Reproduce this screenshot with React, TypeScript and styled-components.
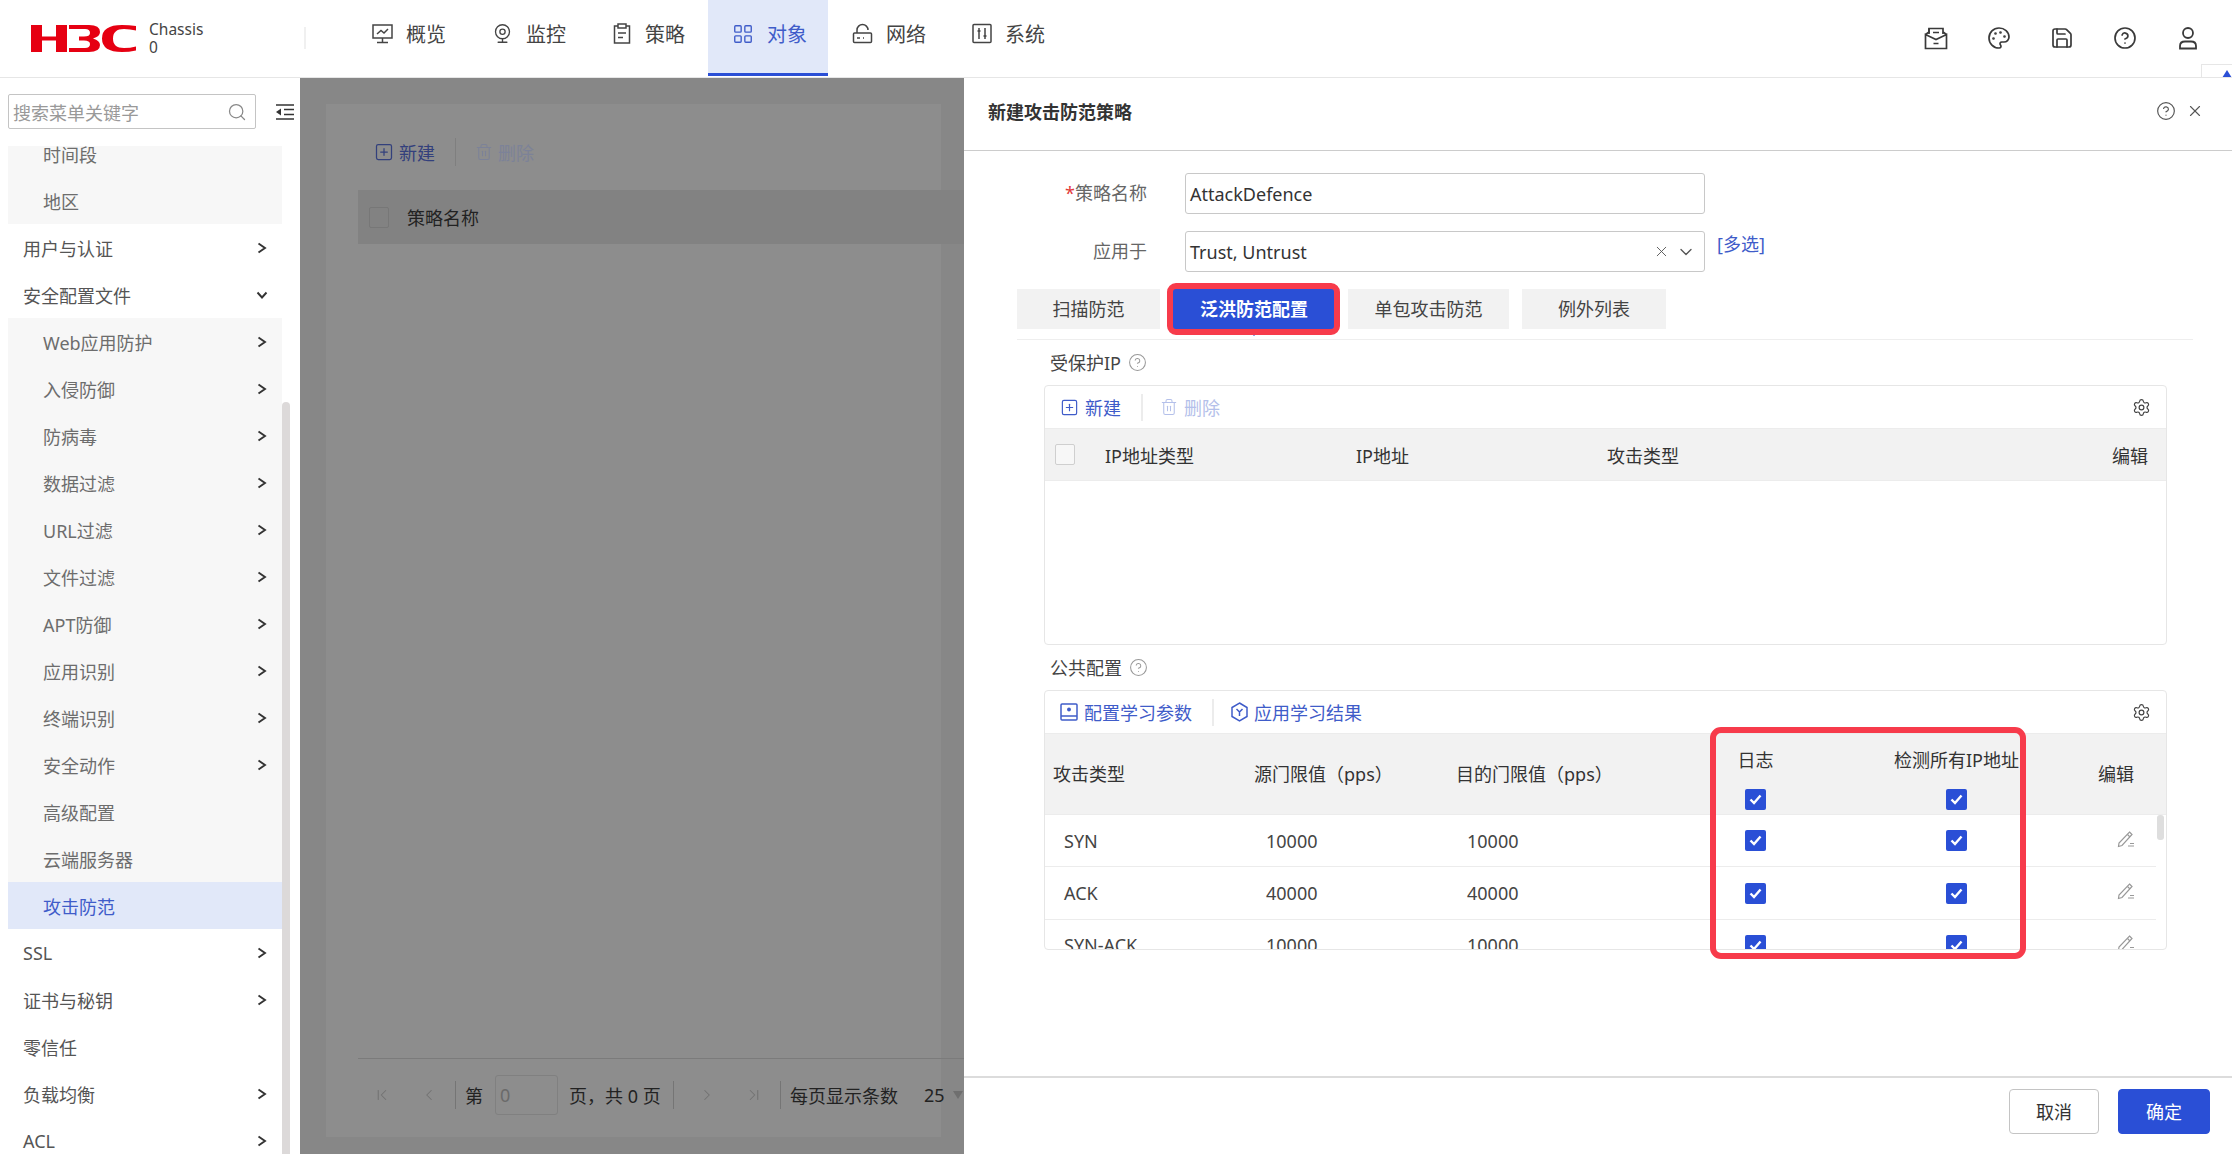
import React from 'react';
import styled, { createGlobalStyle } from 'styled-components';
import {
  ChevronDown,
  ChevronFirst,
  ChevronLast,
  ChevronLeft,
  ChevronRight,
  CircleHelp,
  LayoutGrid,
  Palette,
  Save,
  Search,
  Settings,
  SquarePlus,
  Trash2,
  Webcam,
  X,
} from 'lucide-react';

const BLUE = '#2a4fd6';
const LINK = '#3f5cc9';
const MUTED_LINK = '#b4c0ea';
const HIGHLIGHT = '#f73b4b';

const GlobalStyle = createGlobalStyle`
  html, body {
    margin: 0;
    padding: 0;
    background: #fff;
    overflow: hidden;
  }
  body {
    font-family: "Noto Sans", "Noto Sans CJK SC", sans-serif;
    font-size: 18px;
    color: #333;
  }
  * {
    box-sizing: border-box;
  }
`;

const Page = styled.div`
  display: flex;
  flex-direction: column;
  width: 2232px;
  height: 1154px;
  overflow: hidden;
`;

/* top bar */

const TopBar = styled.header`
  position: relative;
  display: flex;
  align-items: center;
  flex: 0 0 78px;
  padding: 0 32px 1px 31px;
  border-bottom: 1px solid #e6e6e6;
`;

const Brand = styled.div`
  display: flex;
  align-items: center;
  gap: 13px;
  width: 275px;
  height: 22px;
  border-right: 2px solid #f0f0f0;
`;

const BrandText = styled.div`
  font-size: 15.5px;
  line-height: 18px;
  color: #444;
`;

const Nav = styled.nav`
  display: flex;
  align-self: stretch;
  margin-left: 42px;
`;

const NavItem = styled.div<{ $active?: boolean }>`
  display: flex;
  align-items: center;
  gap: 13px;
  width: 120px;
  padding: 0 0 6px 24px;
  font-size: 20px;
  color: ${({ $active }) => ($active ? LINK : '#444')};
  background: ${({ $active }) => ($active ? '#e1e8f9' : 'transparent')};
  border-bottom: 3px solid ${({ $active }) => ($active ? BLUE : 'transparent')};
`;

const TopActions = styled.div`
  display: flex;
  align-items: center;
  gap: 39px;
  margin-left: auto;
  color: #3a3a3a;
`;

const CornerTab = styled.div`
  position: absolute;
  right: 0;
  bottom: 0;
  width: 31px;
  height: 13px;
  background: #fff;
  border: 1px solid #e6e6e6;
  border-right: 0;
  border-bottom: 0;
  overflow: hidden;

  &::after {
    content: '';
    position: absolute;
    right: 0;
    bottom: -1px;
    border-style: solid;
    border-width: 0 5px 8px 5px;
    border-color: transparent transparent ${BLUE} transparent;
  }
`;

/* main area */

const Main = styled.div`
  display: flex;
  flex: 1;
  min-height: 0;
`;

const Sidebar = styled.aside`
  position: relative;
  display: flex;
  flex-direction: column;
  flex: 0 0 300px;
  overflow: hidden;
`;

const SearchRow = styled.div`
  display: flex;
  align-items: flex-start;
  flex: 0 0 68px;
  gap: 20px;
  padding: 16px 0 0 8px;
`;

const SearchBox = styled.div`
  display: flex;
  align-items: center;
  justify-content: space-between;
  width: 248px;
  height: 35px;
  padding: 0 8px 0 4px;
  border: 1px solid #c4c4c4;
  border-radius: 2px;
  font-size: 18px;
  color: #999;
`;

const CollapseBtn = styled.div`
  display: flex;
  height: 35px;
  align-items: center;
  color: #333;
`;

const MenuViewport = styled.div`
  flex: 1;
  min-height: 0;
  overflow: hidden;
`;

const MenuList = styled.div`
  width: 274px;
  margin: -16px 0 0 8px;
`;

const MenuRow = styled.div<{ $sub?: boolean; $active?: boolean }>`
  display: flex;
  align-items: center;
  justify-content: space-between;
  height: 47px;
  padding: 0 14px 0 ${({ $sub }) => ($sub ? 35 : 15)}px;
  font-size: 18px;
  color: ${({ $sub, $active }) => ($active ? LINK : $sub ? '#6d6d6d' : '#555')};
  background: ${({ $sub, $active }) => ($active ? '#e1e8f9' : $sub ? '#f7f7f7' : 'transparent')};
`;

const MenuScrollThumb = styled.div`
  position: absolute;
  top: 324px;
  bottom: 0;
  left: 282px;
  width: 8px;
  border-radius: 4px 4px 0 0;
  background: #dcd9d9;
`;

/* dimmed page behind the drawer */

const Backdrop = styled.div`
  display: flex;
  flex: 0 0 664px;
  padding: 26px 23px 17px 26px;
  background: #878787;
`;

const BackdropPanel = styled.div`
  display: flex;
  flex-direction: column;
  flex: 1;
  padding-left: 32px;
  background: #8d8d8d;
`;

const BackdropToolbar = styled.div`
  display: flex;
  align-items: center;
  flex: 0 0 86px;
  padding: 10px 0 0 16px;
  font-size: 18px;
`;

const BackdropAction = styled.div<{ $disabled?: boolean }>`
  display: flex;
  align-items: center;
  gap: 5px;
  color: ${({ $disabled }) => ($disabled ? '#7c8298' : '#33407c')};
`;

const BackdropDivider = styled.div`
  width: 1px;
  height: 28px;
  margin: 0 19px 0 20px;
  background: #7f7f7f;
`;

const BackdropTableHead = styled.div`
  display: flex;
  align-items: center;
  flex: 0 0 54px;
  gap: 18px;
  margin-right: -23px;
  padding-left: 11px;
  background: #828282;
  color: #222;
`;

const BackdropCheck = styled.div`
  width: 20px;
  height: 21px;
  border: 1px solid #777;
  border-radius: 2px;
`;

const BackdropSpacer = styled.div`
  flex: 1;
`;

const Pager = styled.div`
  display: flex;
  align-items: center;
  flex: 0 0 79px;
  margin-right: -23px;
  padding-bottom: 6px;
  border-top: 1px solid #7b7b7b;
  color: #222;
`;

const PagerBtn = styled.div`
  display: flex;
  align-items: center;
  justify-content: center;
  width: 47px;
  color: #727272;
`;

const PagerDivider = styled.div<{ $gap: number }>`
  width: 1px;
  height: 28px;
  margin: 0 9px 0 ${({ $gap }) => $gap}px;
  background: #757575;
`;

const PagerInput = styled.div`
  width: 63px;
  height: 40px;
  margin: 0 11px 0 12px;
  padding: 0 4px;
  line-height: 38px;
  border: 1px solid #808080;
  border-radius: 3px;
  color: #6a6a6a;
`;

const PagerText = styled.div<{ $width?: number }>`
  width: ${({ $width }) => ($width ? `${$width}px` : 'auto')};
  white-space: nowrap;
`;

const PagerArrow = styled.div`
  width: 0;
  height: 0;
  margin-left: 8px;
  border-style: solid;
  border-width: 8px 5px 0 5px;
  border-color: #6f6f6f transparent transparent transparent;
`;

/* drawer */

const Drawer = styled.section`
  display: flex;
  flex-direction: column;
  flex: 1;
  min-width: 0;
  background: #fff;
`;

const DrawerHead = styled.div`
  display: flex;
  align-items: center;
  justify-content: space-between;
  flex: 0 0 73px;
  padding: 0 28px 6px 24px;
  border-bottom: 1px solid #ccc;
`;

const DrawerTitle = styled.div`
  font-size: 18px;
  font-weight: 700;
  color: #333;
`;

const DrawerHeadIcons = styled.div`
  display: flex;
  align-items: center;
  gap: 10px;
  color: #555;
`;

const DrawerBody = styled.div`
  flex: 1;
  min-height: 0;
  padding-top: 22px;
  overflow: hidden;
`;

const FormRow = styled.div`
  display: flex;
  align-items: flex-start;
  margin-bottom: 17px;
`;

const FormLabel = styled.div`
  flex: 0 0 183px;
  height: 41px;
  line-height: 41px;
  text-align: right;
  color: #666;

  em {
    font-style: normal;
    color: #e23b3b;
  }
`;

const Field = styled.div`
  display: flex;
  align-items: center;
  justify-content: space-between;
  width: 520px;
  height: 41px;
  margin-left: 38px;
  padding: 0 8px 0 4px;
  border: 1px solid #c8c8c8;
  border-radius: 3px;
  color: #333;
`;

const FieldIcons = styled.div`
  display: flex;
  align-items: center;
  gap: 6px;
  color: #555;
`;

const MultiLink = styled.a`
  margin: 1px 0 0 12px;
  line-height: 24px;
  color: ${LINK};
`;

const TabBar = styled.div`
  display: flex;
  gap: 13px;
  margin: 0 39px 0 53px;
  padding-bottom: 10px;
  border-bottom: 1px solid #eee;
`;

const Tab = styled.div<{ $active?: boolean; $width: number }>`
  position: relative;
  width: ${({ $width }) => $width}px;
  height: 40px;
  line-height: 40px;
  text-align: center;
  background: ${({ $active }) => ($active ? BLUE : '#f2f2f2')};
  color: ${({ $active }) => ($active ? '#fff' : '#444')};
  font-weight: ${({ $active }) => ($active ? 700 : 400)};

  ${({ $active }) =>
    $active
      ? `&::after {
    content: '';
    position: absolute;
    left: 50%;
    bottom: -7px;
    margin-left: -7px;
    border-style: solid;
    border-width: 7px 7px 0 7px;
    border-color: ${BLUE} transparent transparent transparent;
  }`
      : ''}
`;

const TabHighlight = styled.div`
  position: absolute;
  inset: -6px -5px -6px -6px;
  border: 6px solid ${HIGHLIGHT};
  border-radius: 9px;
  z-index: 1;
`;

const SectionTitle = styled.div`
  display: flex;
  align-items: center;
  gap: 7px;
  height: 45px;
  padding: 0 0 1px 86px;
  color: #444;
`;

const SectionHint = styled.span`
  display: flex;
  color: #999;
`;

const CardWrap = styled.div`
  position: relative;
  width: 1123px;
  margin-left: 80px;
`;

const Card = styled.div`
  position: relative;
  height: 260px;
  border: 1px solid #e6e6e6;
  border-radius: 4px;
  overflow: hidden;
`;

const CardToolbar = styled.div`
  display: flex;
  align-items: center;
  height: 42px;
  padding: 0 15px;
  color: ${LINK};
`;

const ToolAction = styled.div<{ $disabled?: boolean }>`
  display: flex;
  align-items: center;
  gap: 6px;
  color: ${({ $disabled }) => ($disabled ? MUTED_LINK : LINK)};
`;

const ToolDivider = styled.div`
  width: 2px;
  height: 27px;
  margin: 0 17px 0 20px;
  background: #ececec;
`;

const ToolGear = styled.div`
  display: flex;
  margin-left: auto;
  color: #444;
`;

const IpTableHead = styled.div`
  display: grid;
  grid-template-columns: 50px 251px 251px 505px 1fr;
  align-items: center;
  height: 53px;
  padding-left: 10px;
  background: #f2f2f2;
  border-top: 1px solid #ececec;
  border-bottom: 1px solid #ececec;
  color: #333;
`;

const EmptyCheck = styled.div`
  width: 20px;
  height: 21px;
  border: 1px solid #cfcfcf;
  border-radius: 2px;
  background: #f7f7f7;
`;

const ConfigGrid = styled.div`
  display: grid;
  grid-template-columns: 209px 202px 199px 201px 201px 1fr;
  align-items: center;
`;

const ConfigHead = styled(ConfigGrid)`
  height: 82px;
  background: #f2f2f2;
  border-top: 1px solid #ececec;
  border-bottom: 1px solid #ececec;
  color: #333;
`;

const HeadCell = styled.div<{ $pad?: number }>`
  padding: 0 0 2px ${({ $pad }) => $pad ?? 0}px;
  white-space: nowrap;
`;

const CheckHeadCell = styled.div`
  display: flex;
  flex-direction: column;
  align-items: center;
  gap: 16px;
  padding-top: 13px;
  line-height: 26px;
  white-space: nowrap;
  align-self: start;
`;

const ConfigRow = styled(ConfigGrid)`
  width: 1111px;
  height: 52.4px;
  border-bottom: 1px solid #ececec;
  color: #444;
`;

const BodyCell = styled.div<{ $pad?: number }>`
  padding-left: ${({ $pad }) => $pad ?? 0}px;
`;

const CheckCell = styled.div`
  display: flex;
  justify-content: center;
`;

const CheckMark = styled.div`
  display: flex;
  align-items: center;
  justify-content: center;
  width: 21px;
  height: 21px;
  border-radius: 2px;
  background: ${BLUE};
`;

const TableThumb = styled.div`
  position: absolute;
  top: 124px;
  right: 2px;
  width: 7px;
  height: 25px;
  border-radius: 3px;
  background: #dedede;
`;

const ColumnHighlight = styled.div`
  position: absolute;
  top: 37px;
  left: 666px;
  width: 316px;
  height: 232px;
  border: 6px solid ${HIGHLIGHT};
  border-radius: 11px;
`;

const DrawerFoot = styled.div`
  display: flex;
  align-items: center;
  justify-content: flex-end;
  flex: 0 0 78px;
  gap: 19px;
  padding: 0 22px 10px 0;
  border-top: 2px solid #dcdcdc;
`;

const FootButton = styled.button<{ $primary?: boolean }>`
  width: ${({ $primary }) => ($primary ? 92 : 90)}px;
  height: 45px;
  border: 1px solid ${({ $primary }) => ($primary ? BLUE : '#c4c4c4')};
  border-radius: 4px;
  background: ${({ $primary }) => ($primary ? BLUE : '#fff')};
  color: ${({ $primary }) => ($primary ? '#fff' : '#333')};
  font: inherit;
`;

/* drawings */

const H3cLogo = () => (
  <svg width="105" height="27" viewBox="0 0 105 27" fill="#e60012">
    <path d="M0 0H11V11.5H25V0H36V27H25V15.5H11V27H0Z" />
    <path d="M38 0H58Q69 0 69 7Q69 11.5 62 13.5Q69 15.5 69 20Q69 27 58 27H38V23H54Q59 23 59 19Q59 15.5 53 15.5H48V11.5H53Q59 11.5 59 8Q59 4 54 4H38Z" />
    <path d="M105 1Q98 0 91 0Q71 0 71 13.5Q71 27 91 27Q98 27 105 25.5V21.5Q99 23 93 23Q82 23 82 13.5Q82 4 93 4Q99 4 105 5.5Z" />
  </svg>
);

const line = { fill: 'none', stroke: 'currentColor', strokeWidth: 1.5 };

const OverviewIcon = () => (
  <svg width="21" height="21" viewBox="0 0 21 21" {...line}>
    <rect x="1" y="2" width="19" height="13" />
    <path d="M10.5 15V19M5 19.5H16M5 11L9 7.5L12 10L16 6" />
  </svg>
);

const PolicyIcon = () => (
  <svg width="20" height="21" viewBox="0 0 20 21" {...line}>
    <path d="M6 3H2.5V20H17.5V3H14" />
    <rect x="6" y="1" width="8" height="4" />
    <path d="M6 10H14M6 14.5H11" />
  </svg>
);

const NetworkIcon = () => (
  <svg width="21" height="21" viewBox="0 0 21 21" {...line}>
    <path d="M5 10V7A5.5 5.5 0 0 1 16 7" />
    <rect x="1.5" y="10" width="18" height="9.5" rx="1" />
    <path d="M5 15H8M11 15H12" />
  </svg>
);

const SystemIcon = () => (
  <svg width="20" height="21" viewBox="0 0 20 21" {...line}>
    <rect x="1" y="1.5" width="18" height="18" rx="1" />
    <path d="M7 5V16M13 5V16M5.5 8H8.5M11.5 13H14.5" />
  </svg>
);

const InboxIcon = () => (
  <svg width="24" height="24" viewBox="0 0 24 24" {...line} strokeWidth={1.7}>
    <path d="M5 8V2.5H19V8" />
    <path d="M1.5 8.5L5 6V2.5M22.5 8.5L19 6M1.5 8.5V22.5H22.5V8.5L12 13.5Z" />
    <path d="M9 6.5H15M9.5 17.5H14.5" />
  </svg>
);

const UserIcon = () => (
  <svg width="24" height="24" viewBox="0 0 24 24" {...line} strokeWidth={1.8}>
    <circle cx="12" cy="7" r="5" />
    <path d="M4 22.5V20Q4 15.5 9 15.5H15Q20 15.5 20 20V22.5Z" />
  </svg>
);

const CollapseIcon = () => (
  <svg width="18" height="16" viewBox="0 0 18 16" fill="none" stroke="currentColor" strokeWidth="1.6">
    <path d="M0 1H18M8 5.5H18M8 10.5H18M0 15H18" />
    <path d="M0 8L5 4.5V11.5Z" fill="currentColor" stroke="none" />
  </svg>
);

const MenuChevron = ({ open }: { open?: boolean }) => (
  <svg width="12" height="12" viewBox="0 0 12 12" fill="none" stroke="#333" strokeWidth="1.9">
    <path d={open ? 'M1.5 3.5L6 8.5L10.5 3.5' : 'M2.5 1.5L9 6L2.5 10.5'} />
  </svg>
);

const LearnIcon = () => (
  <svg width="18" height="18" viewBox="0 0 18 18" {...line}>
    <rect x="1" y="1" width="16" height="16" rx="1" />
    <path d="M1 13H17" />
    <circle cx="9" cy="6.5" r="1.2" fill="currentColor" />
  </svg>
);

const ApplyIcon = () => (
  <svg width="17" height="20" viewBox="0 0 17 20" {...line}>
    <path d="M8.5 1L16 5.5V14.5L8.5 19L1 14.5V5.5Z" />
    <path d="M5.5 7L8.5 10L11.5 7M8.5 10V14" />
  </svg>
);

const EditIcon = () => (
  <svg width="18" height="17" viewBox="0 0 18 17" fill="none" stroke="#999" strokeWidth="1.2">
    <path d="M12.5 1L15 3.5L5 14.5L1.5 15.5L2 12Z" />
    <path d="M10.5 3.5L13 6M11 15H17M13 12.5H17" />
  </svg>
);

const Tick = () => (
  <svg width="13" height="11" viewBox="0 0 13 11" fill="none" stroke="#fff" strokeWidth="2.4">
    <path d="M1.5 5.5L5 9L11.5 1.5" />
  </svg>
);

const Checked = () => (
  <CheckMark>
    <Tick />
  </CheckMark>
);

const hint = (
  <SectionHint>
    <CircleHelp size={19} strokeWidth={1.3} />
  </SectionHint>
);

/* data */

const navItems = [
  { label: '概览', icon: <OverviewIcon /> },
  { label: '监控', icon: <Webcam size={21} strokeWidth={1.5} /> },
  { label: '策略', icon: <PolicyIcon /> },
  { label: '对象', icon: <LayoutGrid size={22} strokeWidth={1.5} />, active: true },
  { label: '网络', icon: <NetworkIcon /> },
  { label: '系统', icon: <SystemIcon /> },
];

type MenuEntry = { label: string; sub?: boolean; arrow?: boolean; open?: boolean; active?: boolean };

const menu: MenuEntry[] = [
  { label: '时间段', sub: true },
  { label: '地区', sub: true },
  { label: '用户与认证', arrow: true },
  { label: '安全配置文件', arrow: true, open: true },
  { label: 'Web应用防护', sub: true, arrow: true },
  { label: '入侵防御', sub: true, arrow: true },
  { label: '防病毒', sub: true, arrow: true },
  { label: '数据过滤', sub: true, arrow: true },
  { label: 'URL过滤', sub: true, arrow: true },
  { label: '文件过滤', sub: true, arrow: true },
  { label: 'APT防御', sub: true, arrow: true },
  { label: '应用识别', sub: true, arrow: true },
  { label: '终端识别', sub: true, arrow: true },
  { label: '安全动作', sub: true, arrow: true },
  { label: '高级配置', sub: true },
  { label: '云端服务器', sub: true },
  { label: '攻击防范', sub: true, active: true },
  { label: 'SSL', arrow: true },
  { label: '证书与秘钥', arrow: true },
  { label: '零信任' },
  { label: '负载均衡', arrow: true },
  { label: 'ACL', arrow: true },
];

const tabs = [
  { label: '扫描防范', width: 143 },
  { label: '泛洪防范配置', width: 162, active: true },
  { label: '单包攻击防范', width: 161 },
  { label: '例外列表', width: 144 },
];

const attackRows = [
  { type: 'SYN', source: '10000', target: '10000' },
  { type: 'ACK', source: '40000', target: '40000' },
  { type: 'SYN-ACK', source: '10000', target: '10000' },
];

const App: React.FC = () => (
  <>
    <GlobalStyle />
    <Page>
      <TopBar>
        <Brand>
          <H3cLogo />
          <BrandText>
            Chassis
            <br />0
          </BrandText>
        </Brand>
        <Nav>
          {navItems.map(item => (
            <NavItem key={item.label} $active={item.active}>
              {item.icon}
              <span>{item.label}</span>
            </NavItem>
          ))}
        </Nav>
        <TopActions>
          <InboxIcon />
          <Palette size={24} strokeWidth={1.7} />
          <Save size={24} strokeWidth={1.7} />
          <CircleHelp size={24} strokeWidth={1.7} />
          <UserIcon />
        </TopActions>
        <CornerTab />
      </TopBar>

      <Main>
        <Sidebar>
          <SearchRow>
            <SearchBox>
              <span>搜索菜单关键字</span>
              <Search size={20} strokeWidth={1.5} color="#888" />
            </SearchBox>
            <CollapseBtn>
              <CollapseIcon />
            </CollapseBtn>
          </SearchRow>
          <MenuViewport>
            <MenuList>
              {menu.map(entry => (
                <MenuRow key={entry.label} $sub={entry.sub} $active={entry.active}>
                  <span>{entry.label}</span>
                  {entry.arrow && <MenuChevron open={entry.open} />}
                </MenuRow>
              ))}
            </MenuList>
          </MenuViewport>
          <MenuScrollThumb />
        </Sidebar>

        <Backdrop>
          <BackdropPanel>
            <BackdropToolbar>
              <BackdropAction>
                <SquarePlus size={20} strokeWidth={1.5} />
                新建
              </BackdropAction>
              <BackdropDivider />
              <BackdropAction $disabled>
                <Trash2 size={18} strokeWidth={1.4} />
                删除
              </BackdropAction>
            </BackdropToolbar>
            <BackdropTableHead>
              <BackdropCheck />
              <span>策略名称</span>
            </BackdropTableHead>
            <BackdropSpacer />
            <Pager>
              <PagerBtn>
                <ChevronFirst size={18} strokeWidth={1.4} />
              </PagerBtn>
              <PagerBtn>
                <ChevronLeft size={18} strokeWidth={1.4} />
              </PagerBtn>
              <PagerDivider $gap={3} />
              <PagerText>第</PagerText>
              <PagerInput>0</PagerInput>
              <PagerText $width={95}>页，共 0 页</PagerText>
              <PagerDivider $gap={9} />
              <PagerBtn>
                <ChevronRight size={18} strokeWidth={1.4} />
              </PagerBtn>
              <PagerBtn>
                <ChevronLast size={18} strokeWidth={1.4} />
              </PagerBtn>
              <PagerDivider $gap={3} />
              <PagerText $width={134}>每页显示条数</PagerText>
              <PagerText>25</PagerText>
              <PagerArrow />
            </Pager>
          </BackdropPanel>
        </Backdrop>

        <Drawer>
          <DrawerHead>
            <DrawerTitle>新建攻击防范策略</DrawerTitle>
            <DrawerHeadIcons>
              <CircleHelp size={20} strokeWidth={1.4} />
              <X size={18} strokeWidth={1.5} />
            </DrawerHeadIcons>
          </DrawerHead>

          <DrawerBody>
            <FormRow>
              <FormLabel>
                <em>*</em>策略名称
              </FormLabel>
              <Field>AttackDefence</Field>
            </FormRow>
            <FormRow>
              <FormLabel>应用于</FormLabel>
              <Field>
                <span>Trust, Untrust</span>
                <FieldIcons>
                  <X size={17} strokeWidth={1.3} />
                  <ChevronDown size={20} strokeWidth={1.6} />
                </FieldIcons>
              </Field>
              <MultiLink>[多选]</MultiLink>
            </FormRow>

            <TabBar>
              {tabs.map(tab => (
                <Tab key={tab.label} $active={tab.active} $width={tab.width}>
                  {tab.label}
                  {tab.active && <TabHighlight />}
                </Tab>
              ))}
            </TabBar>

            <SectionTitle>受保护IP {hint}</SectionTitle>
            <CardWrap>
              <Card>
                <CardToolbar>
                  <ToolAction>
                    <SquarePlus size={19} strokeWidth={1.5} />
                    新建
                  </ToolAction>
                  <ToolDivider />
                  <ToolAction $disabled>
                    <Trash2 size={18} strokeWidth={1.4} />
                    删除
                  </ToolAction>
                  <ToolGear>
                    <Settings size={19} strokeWidth={1.5} />
                  </ToolGear>
                </CardToolbar>
                <IpTableHead>
                  <EmptyCheck />
                  <span>IP地址类型</span>
                  <span>IP地址</span>
                  <span>攻击类型</span>
                  <span>编辑</span>
                </IpTableHead>
              </Card>
            </CardWrap>

            <SectionTitle>公共配置 {hint}</SectionTitle>
            <CardWrap>
              <Card>
                <CardToolbar>
                  <ToolAction>
                    <LearnIcon />
                    配置学习参数
                  </ToolAction>
                  <ToolDivider />
                  <ToolAction>
                    <ApplyIcon />
                    应用学习结果
                  </ToolAction>
                  <ToolGear>
                    <Settings size={19} strokeWidth={1.5} />
                  </ToolGear>
                </CardToolbar>
                <ConfigHead>
                  <HeadCell $pad={8}>攻击类型</HeadCell>
                  <HeadCell>源门限值（pps）</HeadCell>
                  <HeadCell>目的门限值（pps）</HeadCell>
                  <CheckHeadCell>
                    日志
                    <Checked />
                  </CheckHeadCell>
                  <CheckHeadCell>
                    检测所有IP地址
                    <Checked />
                  </CheckHeadCell>
                  <HeadCell $pad={41}>编辑</HeadCell>
                </ConfigHead>
                {attackRows.map(row => (
                  <ConfigRow key={row.type}>
                    <BodyCell $pad={19}>{row.type}</BodyCell>
                    <BodyCell $pad={12}>{row.source}</BodyCell>
                    <BodyCell $pad={11}>{row.target}</BodyCell>
                    <CheckCell>
                      <Checked />
                    </CheckCell>
                    <CheckCell>
                      <Checked />
                    </CheckCell>
                    <BodyCell $pad={60}>
                      <EditIcon />
                    </BodyCell>
                  </ConfigRow>
                ))}
                <TableThumb />
              </Card>
              <ColumnHighlight />
            </CardWrap>
          </DrawerBody>

          <DrawerFoot>
            <FootButton>取消</FootButton>
            <FootButton $primary>确定</FootButton>
          </DrawerFoot>
        </Drawer>
      </Main>
    </Page>
  </>
);

export default App;
